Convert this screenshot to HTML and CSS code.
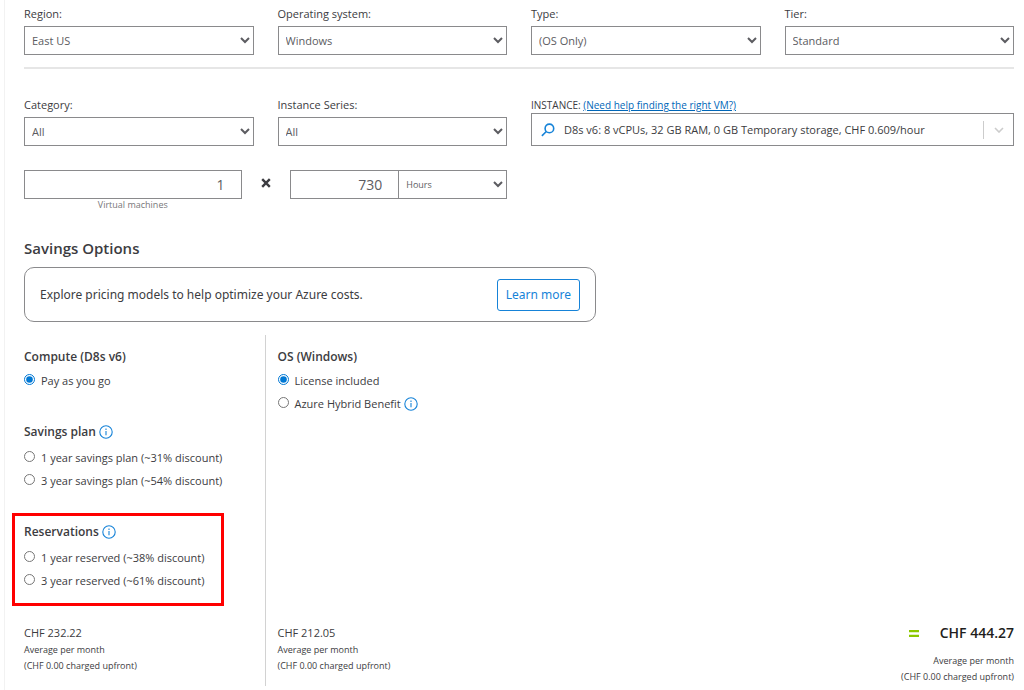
FILE: index.html
```html
<!DOCTYPE html>
<html lang="en">
<head>
<meta charset="utf-8">
<meta name="viewport" content="width=device-width, initial-scale=1">
<title>Virtual Machines estimate</title>
<link rel="stylesheet" href="styles.css">
</head>
<body>
<svg class="defs" aria-hidden="true">
  <symbol id="info" viewBox="0 0 14 14">
    <circle cx="7" cy="7" r="6.2" fill="none" stroke="currentColor" stroke-width="1.1"/>
    <path d="M7 6v4.2M7 3.6v1.3" fill="none" stroke="currentColor" stroke-width="1.1"/>
  </symbol>
</svg>
<main class="estimate">
  <div class="grid top-fields">
    <div class="field"><label for="region">Region:</label><select id="region"><option>East US</option></select></div>
    <div class="field"><label for="os">Operating system:</label><select id="os"><option>Windows</option></select></div>
    <div class="field"><label for="type">Type:</label><select id="type"><option>(OS Only)</option></select></div>
    <div class="field"><label for="tier">Tier:</label><select id="tier"><option>Standard</option></select></div>
  </div>
  <hr class="rule">
  <div class="grid instance-fields">
    <div class="field"><label for="category">Category:</label><select id="category"><option>All</option></select></div>
    <div class="field"><label for="series">Instance Series:</label><select id="series"><option>All</option></select></div>
    <div class="field instance">
      <div class="instance-label"><label for="instance">INSTANCE:</label> <a href="#help">(Need help finding the right VM?)</a></div>
      <div class="combo">
        <svg class="search" viewBox="0 0 14 14" aria-hidden="true"><circle cx="8.4" cy="5.4" r="4.3"/><path d="M5.3 8.5L.9 12.9"/></svg>
        <input id="instance" type="text" value="D8s v6: 8 vCPUs, 32 GB RAM, 0 GB Temporary storage, CHF 0.609/hour">
        <span class="combo-arrow"><svg viewBox="0 0 10 6" aria-hidden="true"><path d="M1 1l4 4 4-4"/></svg></span>
      </div>
    </div>
  </div>
  <div class="grid">
    <div class="quantity">
      <div class="count">
        <input id="count" class="number" type="text" value="1">
        <label for="count">Virtual machines</label>
      </div>
      <svg class="times" viewBox="0 0 10 10" role="img" aria-label="times"><path d="M1.2 1.2l7.6 7.6M8.8 1.2L1.2 8.8"/></svg>
      <div class="duration">
        <input class="number" type="text" value="730" aria-label="Duration">
        <select aria-label="Duration unit"><option>Hours</option></select>
      </div>
    </div>
  </div>
  <h2 class="title">Savings Options</h2>
  <div class="banner">
    <p>Explore pricing models to help optimize your Azure costs.</p>
    <button type="button">Learn more</button>
  </div>
  <div class="grid pricing">
    <section class="column compute">
      <div class="group">
        <h3>Compute (D8s v6)</h3>
        <label class="choice"><input type="radio" name="compute" checked>Pay as you go</label>
      </div>
      <div class="group">
        <h3 class="with-info">Savings plan <svg class="info"><use href="#info"/></svg></h3>
        <label class="choice"><input type="radio" name="compute">1 year savings plan (~31% discount)</label>
        <label class="choice"><input type="radio" name="compute">3 year savings plan (~54% discount)</label>
      </div>
      <div class="group marked">
        <h3 class="with-info">Reservations <svg class="info"><use href="#info"/></svg></h3>
        <label class="choice"><input type="radio" name="compute">1 year reserved (~38% discount)</label>
        <label class="choice"><input type="radio" name="compute">3 year reserved (~61% discount)</label>
      </div>
      <div class="cost">
        <p class="amount">CHF 232.22</p>
        <p>Average per month</p>
        <p>(CHF 0.00 charged upfront)</p>
      </div>
    </section>
    <section class="column">
      <div class="group">
        <h3>OS (Windows)</h3>
        <label class="choice"><input type="radio" name="license" checked>License included</label>
        <label class="choice"><input type="radio" name="license">Azure Hybrid Benefit <svg class="info"><use href="#info"/></svg></label>
      </div>
      <div class="cost">
        <p class="amount">CHF 212.05</p>
        <p>Average per month</p>
        <p>(CHF 0.00 charged upfront)</p>
      </div>
    </section>
    <section class="total">
      <p class="sum"><svg class="equals" viewBox="0 0 10 7" role="img" aria-label="equals"><path d="M0 1.2h10M0 5.8h10"/></svg>CHF 444.27</p>
      <p>Average per month</p>
      <p>(CHF 0.00 charged upfront)</p>
    </section>
  </div>
</main>
</body>
</html>
```
FILE: styles.css
```css
*, *::before { box-sizing: border-box; }
body {
  margin: 0;
  background: #fff;
  color: #3c3c41;
  font: 11px/16px "Open Sans", "Noto Sans", sans-serif;
}
h2, h3, p { margin: 0; }
input, select, button { font: inherit; color: inherit; margin: 0; }
.defs { position: absolute; width: 0; height: 0; }
.estimate {
  min-height: 100vh;
  margin-left: 4px;
  padding: 6px 10px 4px 19px;
  border-left: 1px solid #f2f2f2;
}
.grid {
  display: grid;
  grid-template-columns: repeat(4, minmax(0, 1fr));
  column-gap: 24px;
}
.field { display: flex; flex-direction: column; gap: 4px; }
select {
  width: 100%;
  height: 29px;
  padding: 0 0 0 3px;
  border: 1px solid #8a8a8c;
  border-radius: 0;
  background: #fff;
  color: #5c5c61;
}
.rule {
  height: 2px;
  margin: 12px 0 28px;
  border: 0;
  background: #e6e6e6;
}
.instance-fields { margin-bottom: 24px; }
.instance { grid-column: span 2; gap: 0; }
.instance-label { font-size: 10px; }
.instance-label a { color: #0067b8; }
.combo {
  display: flex;
  align-items: center;
  height: 33px;
  padding-left: 9px;
  border: 1px solid #8a8a8c;
}
.combo input {
  flex: 1;
  min-width: 0;
  padding: 0 0 0 9px;
  border: 0;
  outline: 0;
  background: none;
}
.search { width: 14px; height: 14px; fill: none; stroke: #1683d8; stroke-width: 1.6; }
.combo-arrow {
  display: flex;
  align-items: center;
  justify-content: center;
  width: 30px;
  height: 18px;
  border-left: 1px solid #ccc;
}
.combo-arrow svg { width: 10px; height: 6px; fill: none; stroke: #ccc; stroke-width: 1.6; }
.quantity {
  grid-column: span 2;
  display: flex;
  align-items: flex-start;
}
.count { flex: 1; text-align: center; }
.count label { display: block; font-size: 9px; line-height: 12px; color: #77777a; }
.number {
  display: block;
  width: 100%;
  height: 29px;
  padding: 0 16px;
  border: 1px solid #8a8a8c;
  border-radius: 0;
  color: #5c5c61;
  font-size: 14px;
  text-align: right;
}
.times {
  width: 10px;
  height: 10px;
  margin: 8px 19px 0;
  stroke: #3c3c41;
  stroke-width: 2.4;
}
.duration { flex: 1; display: grid; grid-template-columns: 1fr 1fr; }
.duration .number { border-right: 0; min-width: 0; }
.duration select { font-size: 9px; }
.title {
  margin-top: 25px;
  font-size: 15px;
  line-height: 24px;
  font-weight: 600;
}
.banner {
  display: flex;
  align-items: center;
  justify-content: space-between;
  max-width: 572px;
  height: 55px;
  margin-top: 7px;
  padding: 0 15px;
  border: 1px solid #8a8a8c;
  border-radius: 10px;
  font-family: "Noto Sans", "Open Sans", sans-serif;
  font-size: 12px;
}
.banner button {
  height: 32px;
  padding: 0 8px;
  border: 1px solid #1683d8;
  border-radius: 3px;
  background: #fff;
  color: #1683d8;
}
.pricing { margin-top: 13px; }
.column { display: flex; flex-direction: column; padding-top: 12px; }
.compute { margin-right: -12px; border-right: 1px solid #d2d2d2; }
.group { position: relative; margin-bottom: 30px; }
h3 {
  display: flex;
  align-items: center;
  gap: 3px;
  margin-bottom: 2px;
  font-size: 12px;
  line-height: 20px;
  font-weight: 600;
}
.with-info { margin-bottom: 4px; }
.info { width: 14px; height: 14px; color: #1683d8; }
.choice { display: flex; align-items: center; height: 23px; }
.choice input { width: 11px; height: 11px; margin: 0 6px 2px 0; accent-color: #0078d4; }
.choice .info { margin-left: 3px; }
.marked::before {
  content: "";
  position: absolute;
  inset: -9px auto -14px -12px;
  width: 212px;
  border: 3px solid #f00;
  pointer-events: none;
}
.cost { margin-top: auto; padding: 2px 0 12px; font-size: 9px; }
.amount { font-size: 11px; line-height: 18px; }
.total {
  grid-column: span 2;
  align-self: end;
  padding-bottom: 1px;
  font-size: 9px;
  text-align: right;
}
.sum {
  display: flex;
  align-items: center;
  justify-content: flex-end;
  gap: 21px;
  margin-bottom: 8px;
  color: #1e1e20;
  font-size: 14px;
  line-height: 24px;
  font-weight: 600;
}
.equals { width: 10px; height: 7px; stroke: #8cc800; stroke-width: 2.2; }
```
